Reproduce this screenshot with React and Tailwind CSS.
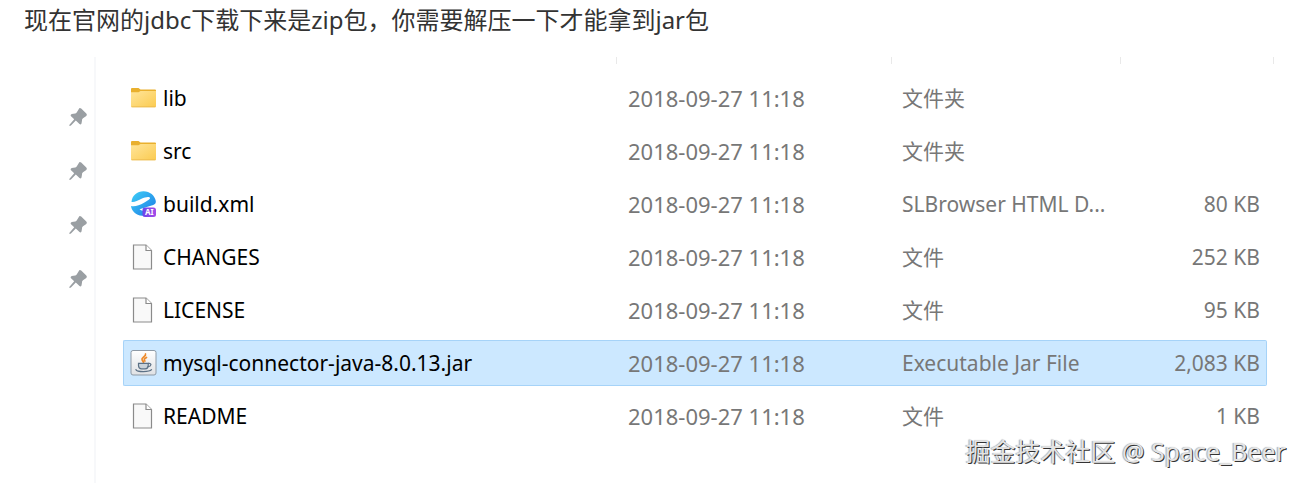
import { clsx } from "clsx";

const files = [
  { name: "lib", icon: FolderIcon, type: "文件夹", size: "" },
  { name: "src", icon: FolderIcon, type: "文件夹", size: "" },
  { name: "build.xml", icon: BrowserIcon, type: "SLBrowser HTML D...", size: "80 KB" },
  { name: "CHANGES", icon: FileIcon, type: "文件", size: "252 KB" },
  { name: "LICENSE", icon: FileIcon, type: "文件", size: "95 KB" },
  { name: "mysql-connector-java-8.0.13.jar", icon: JarIcon, type: "Executable Jar File", size: "2,083 KB", selected: true },
  { name: "README", icon: FileIcon, type: "文件", size: "1 KB" },
];

export default function App() {
  return (
    <div className="relative flex min-h-screen flex-col bg-white font-['Noto_Sans','Noto_Sans_CJK_SC',sans-serif]">
      <p className="px-6 pt-1 text-2xl leading-8 text-[#333]">
        现在官网的jdbc下载下来是zip包，你需要解压一下才能拿到jar包
      </p>

      <div className="mt-[21px] flex flex-1">
        {/* Quick access pins */}
        <aside className="flex w-24 shrink-0 flex-col items-end gap-[34px] border-r-2 border-[#f7f8fa] pt-[50px] pr-[6px]">
          <PinIcon />
          <PinIcon />
          <PinIcon />
          <PinIcon />
        </aside>

        <main className="min-w-0 flex-1 pr-[39px] pl-[27px]">
          {/* Column dividers */}
          <div className="-mr-[7px] flex h-[7px]">
            <span className="flex-1 border-r border-[#e9e9e9]" />
            <span className="w-[275px] border-r border-[#e9e9e9]" />
            <span className="w-[229px] border-r border-[#e9e9e9]" />
            <span className="w-[153px] border-r border-[#e9e9e9]" />
          </div>

          <div className="pt-1">
            <table className="w-full table-fixed border-separate border-spacing-x-0 border-spacing-y-[7px] text-[21px] leading-7 text-[#777]">
              <colgroup>
                <col />
                <col className="w-[275px]" />
                <col className="w-[229px]" />
                <col className="w-[146px]" />
              </colgroup>
              <tbody>
                {files.map((file) => (
                  <FileRow key={file.name} {...file} />
                ))}
              </tbody>
            </table>
          </div>
        </main>
      </div>

      <div className="absolute right-5 bottom-[14px] text-[25px] leading-9 text-[#e4e4e4] [text-shadow:1px_1px_0_#333,-1px_0_1px_#aaa]">
        掘金技术社区 @ Space_Beer
      </div>
    </div>
  );
}

function FileRow({ name, icon: Icon, type, size, selected }) {
  const cell = clsx("h-[46px] border-y p-0 whitespace-nowrap", selected ? "border-[#a6d3f8] bg-[#cce8ff]" : "border-transparent");
  return (
    <tr aria-selected={!!selected}>
      <td className={clsx(cell, "rounded-l-xs border-l text-black")}>
        <div className="flex items-center gap-[6px] pl-[6px]">
          <Icon />
          {name}
        </div>
      </td>
      <td className={clsx(cell, "pl-[11px] text-[22px]")}>2018-09-27 11:18</td>
      <td className={clsx(cell, "pl-[10px]")}>{type}</td>
      <td className={clsx(cell, "rounded-r-xs border-r pr-[6px] text-right")}>{size}</td>
    </tr>
  );
}

function PinIcon() {
  return (
    <svg className="h-5 w-5" viewBox="0 0 20 20" fill="#9a9fa3">
      <path d="M11.300 1.200Q12.300.900 13.200 1.600L18.300 6.600Q19.500 8 18.300 8.900L15 11.200Q13.800 12 14 13.400L13.500 16.400Q12.800 18 11.500 17L7.800 13.600 3.200 18.300Q1.300 19.700 1.300 18L6.200 12.200 2.800 9Q2 7.600 3.700 6.900L7.300 6.500Q8.400 6.200 9 5Z" />
    </svg>
  );
}

function FolderIcon() {
  return (
    <svg className="h-7 w-[27px] shrink-0" viewBox="0 0 27 28">
      <defs>
        <linearGradient id="folder" x1="0" y1="0" x2="1" y2="1">
          <stop offset="0" stopColor="#ffe59a" />
          <stop offset="1" stopColor="#fbcb50" />
        </linearGradient>
      </defs>
      <path d="M1 5q0-1 1-1h6.500l2 1.500H25q1 0 1 1V12H1Z" fill="#e9b02e" />
      <path d="M1 8.300h7.500L10.500 7H26v15.300q0 1-1 1H2q-1 0-1-1Z" fill="url(#folder)" />
      <path d="M1.500 22.800h24" stroke="#e8b84b" strokeWidth=".8" />
    </svg>
  );
}

function FileIcon() {
  return (
    <svg className="h-7 w-[27px] shrink-0" viewBox="0 0 27 28">
      <path d="M3.500 2h12.500l5.500 5.500V26h-18Z" fill="#f9f9f9" stroke="#8b8b8b" strokeWidth="1.200" />
      <path d="M16 2v5.500h5.500" fill="#fff" stroke="#8b8b8b" strokeWidth="1.200" />
    </svg>
  );
}

function BrowserIcon() {
  return (
    <svg className="h-7 w-[27px] shrink-0" viewBox="0 0 27 28">
      <defs>
        <linearGradient id="globe" x1="0" y1="0" x2="1" y2="1">
          <stop offset="0" stopColor="#3fd0f7" />
          <stop offset="1" stopColor="#1b78e4" />
        </linearGradient>
        <linearGradient id="badge" x1="0" y1="0" x2="1" y2="0">
          <stop offset="0" stopColor="#6a45ea" />
          <stop offset="1" stopColor="#a64be8" />
        </linearGradient>
      </defs>
      <path d="M1.500 12C2 5.500 7.200 1.200 13.500 1.200c6.500 0 11.300 4.300 12.300 9.800.3 2-.6 3.200-2.600 4L9.500 19.300c4 2.600 8 2.400 13 .7-2.500 4.300-6.200 6.200-10.300 5.800C5.700 25.200 1.500 20.700 1 16c3.500 1 8.500-.6 13-3.200 3.500-2 6.500-3.800 6-5-.8-1.600-5.200-.6-8.500 1C7.500 10.700 4.500 12.500 1.500 12Z" fill="url(#globe)" />
      <rect x="12.500" y="17.500" width="13.500" height="9.500" rx="2.500" fill="url(#badge)" />
      <text x="19.300" y="25" textAnchor="middle" fontSize="8" fontWeight="700" fill="#fff">AI</text>
    </svg>
  );
}

function JarIcon() {
  return (
    <svg className="h-7 w-[27px] shrink-0" viewBox="0 0 27 28">
      <defs>
        <linearGradient id="jar" x1="0" y1="0" x2="0" y2="1">
          <stop offset="0" stopColor="#fff" />
          <stop offset="1" stopColor="#dfe1e4" />
        </linearGradient>
      </defs>
      <rect x="1" y="1.500" width="25" height="24.500" rx="2" fill="url(#jar)" stroke="#8e9aa6" />
      <path d="M15.500 5c1 2.500-4.500 3.500-3.500 5.800.4 1 1.400 1.500 1.500 2.700M16.500 8.500c-2.300 1.200-2.800 2-1.600 3.500" fill="none" stroke="#ee8a2a" strokeWidth="1.700" strokeLinecap="round" />
      <path d="M8.500 14.300h9.700v2.500c0 2-1.400 3-3 3h-3.700c-1.600 0-3-1-3-3Z" fill="#c9d2da" stroke="#5c7186" strokeWidth="1.200" />
      <path d="M18.500 14.500c3.500-.6 3 2.800-.5 3.200M6 20.700c1 2.500 13.500 2.500 15.500 0" fill="none" stroke="#5c7186" strokeWidth="1.300" strokeLinecap="round" />
    </svg>
  );
}
